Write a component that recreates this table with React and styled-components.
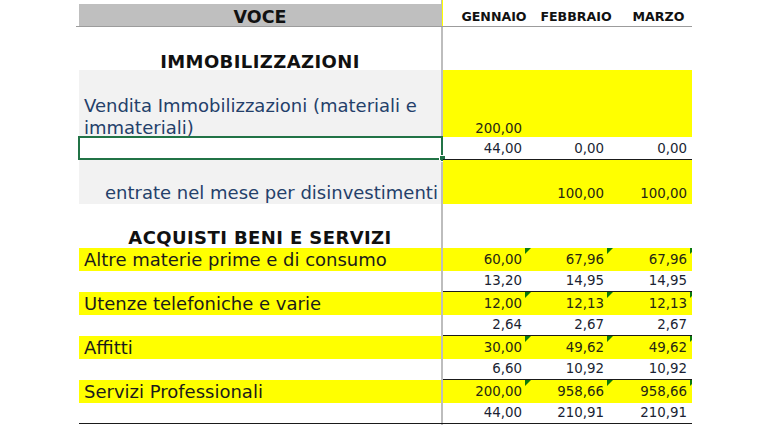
import React from "react";
import styled, { createGlobalStyle } from "styled-components";

const Global = createGlobalStyle`
  html, body { margin: 0; padding: 0; background: #ffffff; }
  body { font-family: "DejaVu Sans", Verdana, sans-serif; }
`;

const YELLOW = "#ffff00";

const Sheet = styled.div`
  width: 768px;
  height: 425px;
  overflow: hidden;
  padding-left: 79px;
  box-sizing: border-box;
  display: flex;
  flex-direction: column;
`;

const Row = styled.div`
  flex: none;
  display: grid;
  grid-template-columns: 362px 2px 82px 82px 83px 2px;
  width: 613px;
  height: ${(p) => p.$h}px;
  ${(p) =>
    p.$line &&
    `
    margin-left: -3px;
    padding-left: 3px;
    border-bottom: 1px solid #9c9c9c;
  `}
  ${(p) => p.$fill && `flex: 1 1 auto; height: auto;`}
`;

const Label = styled.div`
  position: relative;
  box-sizing: border-box;
  background: ${(p) => p.$bg || "transparent"};
  border-bottom: ${(p) => (p.$rule ? "1px solid #1a1a1a" : "none")};
  display: flex;
  align-items: ${(p) => p.$align || "center"};
  justify-content: ${(p) => (p.$center ? "center" : "flex-start")};
  padding-left: ${(p) => (p.$center ? 0 : p.$indent ?? 5)}px;
  padding-top: ${(p) => p.$pt || 0}px;
  padding-bottom: ${(p) => p.$pb || 0}px;
  font-size: 18px;
  line-height: 22px;
  color: ${(p) => p.$color || "#1b1b1b"};
  white-space: nowrap;
`;

const Title = styled.span`
  font-weight: 700;
  font-size: ${(p) => p.$size || 18}px;
  line-height: 17px;
  letter-spacing: ${(p) => p.$ls ?? 0.4}px;
  color: #111111;
`;

const Wrapped = styled.span`
  white-space: normal;
  line-height: 22px;
  margin-bottom: -2px;
`;

const Divider = styled.div`
  box-sizing: border-box;
  background: ${(p) =>
    p.$top ? "linear-gradient(90deg, #bdbdbd 50%, #ffff00 50%)" : "#bdbdbd"};
  border-bottom: ${(p) => (p.$rule ? "1px solid #1a1a1a" : "none")};
`;

const Num = styled.div`
  position: relative;
  box-sizing: border-box;
  background: ${(p) => (p.$yellow ? YELLOW : "transparent")};
  border-bottom: ${(p) => (p.$rule ? "1px solid #1a1a1a" : "none")};
  display: flex;
  justify-content: flex-end;
  align-items: ${(p) => (p.$bottom ? "flex-end" : "center")};
  padding-right: 3px;
  padding-top: ${(p) => (p.$bottom ? 0 : 1)}px;
  padding-bottom: ${(p) => p.$pb || 0}px;
  font-size: 13.4px;
  line-height: ${(p) => (p.$bottom ? 16 : 20)}px;
  color: ${(p) => (p.$yellow ? "#262614" : "#1a1f33")};
  white-space: nowrap;
`;

const Stub = styled.div`
  position: relative;
  overflow: hidden;
  box-sizing: border-box;
  background: ${(p) => (p.$yellow ? YELLOW : "transparent")};
  border-bottom: ${(p) => (p.$rule ? "1px solid #1a1a1a" : "none")};
`;

const Flag = styled.span`
  position: absolute;
  top: 0;
  left: 0;
  width: 0;
  height: 0;
  border-top: 6px solid #0b7a0b;
  border-right: 6px solid transparent;
`;

const Month = styled.div`
  display: flex;
  justify-content: center;
  align-items: flex-end;
  padding-left: 20px;
  padding-bottom: 1px;
  font-size: 12.6px;
  font-weight: 700;
  line-height: 16px;
  color: #111111;
  white-space: nowrap;
`;

const Selection = styled.div`
  position: absolute;
  top: -1px;
  left: -1px;
  right: -2px;
  bottom: 0;
  border: 2px solid #217346;
  pointer-events: none;
`;

const Handle = styled.div`
  position: absolute;
  right: -4px;
  bottom: -3px;
  width: 5px;
  height: 5px;
  background: #217346;
  box-shadow: 0 0 0 1px #ffffff;
`;

const months = ["GENNAIO", "FEBBRAIO", "MARZO"];

const items = [
  {
    label: "Altre materie prime e di consumo",
    values: ["60,00", "67,96", "67,96"],
    vat: ["13,20", "14,95", "14,95"],
  },
  {
    label: "Utenze telefoniche e varie",
    values: ["12,00", "12,13", "12,13"],
    vat: ["2,64", "2,67", "2,67"],
  },
  {
    label: "Affitti",
    values: ["30,00", "49,62", "49,62"],
    vat: ["6,60", "10,92", "10,92"],
  },
  {
    label: "Servizi Professionali",
    values: ["200,00", "958,66", "958,66"],
    vat: ["44,00", "210,91", "210,91"],
  },
];

function Blank({ h }) {
  return (
    <Row $h={h}>
      <Label />
      <Divider />
      <Num />
      <Num />
      <Num />
      <Stub />
    </Row>
  );
}

function ItemRows({ item, last }) {
  return (
    <>
      <Row $h={22}>
        <Label $bg={YELLOW} $pt={1}>
          {item.label}
        </Label>
        <Divider />
        {item.values.map((v, i) => (
          <Num key={i} $yellow>
            {i > 0 && <Flag />}
            {v}
          </Num>
        ))}
        <Stub $yellow>
          <Flag />
        </Stub>
      </Row>
      <Row $h={22}>
        <Label $rule={last} />
        <Divider $rule={last} />
        {item.vat.map((v, i) => (
          <Num key={i} $rule>
            {v}
          </Num>
        ))}
        <Stub $rule />
      </Row>
    </>
  );
}

export default function App() {
  return (
    <>
      <Global />
      <Sheet>
        <Row $h={4}>
          <Label />
          <Divider $top />
          <Num />
          <Num />
          <Num />
          <Stub />
        </Row>
        <Row $h={22} $line>
          <Label $bg="#bfbfbf" $center $align="flex-end">
            <Title $size={17.5} $ls={0}>
              VOCE
            </Title>
          </Label>
          <Divider $top />
          {months.map((m) => (
            <Month key={m}>{m}</Month>
          ))}
          <Stub />
        </Row>
        <Blank h={21} />
        <Row $h={22}>
          <Label $center $align="flex-end">
            <Title>IMMOBILIZZAZIONI</Title>
          </Label>
          <Divider />
          <Num />
          <Num />
          <Num />
          <Stub />
        </Row>
        <Row $h={67}>
          <Label $bg="#f2f2f2" $align="flex-end" $color="#24406a">
            <Wrapped>
              Vendita Immobilizzazioni (materiali e
              <br />
              immateriali)
            </Wrapped>
          </Label>
          <Divider />
          <Num $yellow $bottom>
            200,00
          </Num>
          <Num $yellow $bottom />
          <Num $yellow $bottom />
          <Stub $yellow />
        </Row>
        <Row $h={23}>
          <Label>
            <Selection>
              <Handle />
            </Selection>
          </Label>
          <Divider />
          <Num $rule>44,00</Num>
          <Num $rule>0,00</Num>
          <Num $rule>0,00</Num>
          <Stub $rule />
        </Row>
        <Row $h={44}>
          <Label $bg="#f2f2f2" $align="flex-end" $indent={26} $color="#24406a">
            entrate nel mese per disinvestimenti
          </Label>
          <Divider />
          <Num $yellow $bottom />
          <Num $yellow $bottom $pb={2}>
            100,00
          </Num>
          <Num $yellow $bottom $pb={2}>
            100,00
          </Num>
          <Stub $yellow />
        </Row>
        <Blank h={22} />
        <Row $h={22}>
          <Label $center $align="flex-end" $pb={2}>
            <Title>ACQUISTI BENI E SERVIZI</Title>
          </Label>
          <Divider />
          <Num />
          <Num />
          <Num />
          <Stub />
        </Row>
        {items.map((it, i) => (
          <ItemRows key={it.label} item={it} last={i === items.length - 1} />
        ))}
        <Row $fill>
          <Label />
          <Divider />
          <Num />
          <Num />
          <Num />
          <Stub />
        </Row>
      </Sheet>
    </>
  );
}
